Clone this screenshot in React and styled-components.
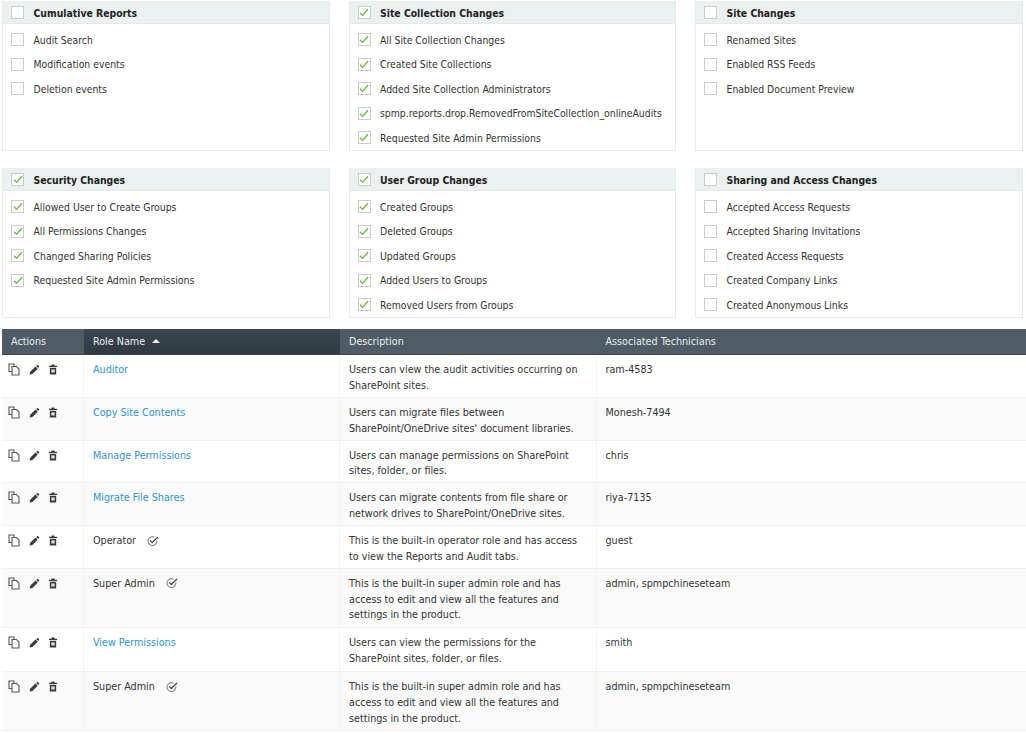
import React from 'react';
import styled, { createGlobalStyle } from 'styled-components';

const GlobalStyle = createGlobalStyle`
  html, body {
    margin: 0;
    padding: 0;
    background: #fff;
    overflow: hidden;
  }
  body {
    font-family: 'DejaVu Sans Condensed', 'DejaVu Sans', Verdana, sans-serif;
    font-size: 10.35px;
    color: #333;
  }
`;

const Page = styled.div`
  width: 1026px;
  height: 733px;
  overflow: hidden;
  padding-top: 1px;
  box-sizing: border-box;
`;

const CardGrid = styled.div`
  display: grid;
  grid-template-columns: repeat(3, 327.5px);
  column-gap: 19px;
  row-gap: 17.5px;
  padding-left: 2px;
`;

const Card = styled.section`
  height: 149.5px;
  box-sizing: border-box;
  border: 1px solid #e8eaea;
  border-top: 0;
  background: #fff;
`;

const CardHead = styled.header`
  height: 23px;
  box-sizing: border-box;
  display: flex;
  align-items: center;
  gap: 9.5px;
  padding: 1px 0 0 8px;
  background: #ebf0f0;
  border-bottom: 1px solid #e4e8e8;
  font-weight: 700;
  color: #222;
`;

const CardList = styled.ul`
  list-style: none;
  margin: 0;
  padding: 3.5px 0 0 8px;
`;

const CardItem = styled.li`
  height: 24.5px;
  display: flex;
  align-items: center;
  gap: 9.5px;
  white-space: nowrap;
`;

const Box = styled.span`
  width: 11px;
  height: 11px;
  flex: none;
  border: 1px solid #cbcbcb;
  background: #fff;
  display: flex;
  align-items: center;
  justify-content: center;
`;

const Table = styled.div`
  margin-top: 11.5px;
  margin-left: 2px;
  font-size: 10.7px;
`;

const HeadRow = styled.div`
  display: grid;
  grid-template-columns: 82px 256px 256.5px 429.5px;
  height: 26px;
  color: #e8ecee;
  background: #4f5c65;
  border-bottom: 1px solid #3b464e;
  box-sizing: border-box;
`;

const HeadCell = styled.div`
  display: flex;
  align-items: center;
  gap: 7px;
  padding: 0 0 1px 9px;
  background: ${p => (p.$sorted ? 'linear-gradient(#3a464e, #2f3a42)' : 'transparent')};
`;

const SortArrow = styled.span`
  width: 0;
  height: 0;
  border-left: 4px solid transparent;
  border-right: 4px solid transparent;
  border-bottom: 4px solid #f2f2f2;
`;

const Row = styled.div`
  display: grid;
  grid-template-columns: 82px 256px 256.5px 429.5px;
  height: ${p => p.$height}px;
  box-sizing: border-box;
  background: ${p => (p.$odd ? '#fafafa' : '#fff')};
  border-bottom: 1px solid #f0f0f0;
`;

const Cell = styled.div`
  padding: 7px 9px 0;
  border-right: 1px solid #f2f2f2;
  line-height: 15.7px;
  white-space: nowrap;
  &:last-child {
    border-right: 0;
  }
`;

const ActionsCell = styled(Cell)`
  display: flex;
  align-items: flex-start;
  gap: 8px;
  padding: 8px 0 0 6px;
`;

const RoleLink = styled.a`
  color: #2f92d2;
  text-decoration: none;
`;

const RoleName = styled.span`
  display: inline-flex;
  align-items: center;
  gap: 11px;
`;

const Check = () => (
  <svg width="10" height="9" viewBox="0 0 10 9">
    <path d="M1 4.8 L3.6 7.4 L9 1.2" fill="none" stroke="#6cb33f" strokeWidth="1.3" />
  </svg>
);

const CopyIcon = () => (
  <svg width="12" height="13" viewBox="0 0 12 13">
    <path d="M4 8.5H1V1h5v2.5" fill="none" stroke="#555" strokeWidth="1.1" />
    <path d="M4 3.5h4.5L11 6v6H4z" fill="#fff" stroke="#555" strokeWidth="1.1" />
  </svg>
);

const PencilIcon = () => (
  <svg width="12" height="13" viewBox="0 0 12 13">
    <path d="M1.6 11.6 L2.2 8.8 L7.5 3.5 L9.7 5.7 L4.4 11 Z" fill="#3a3a3a" />
    <path d="M8.2 2.9 L9.5 1.7 L11.4 3.6 L10.2 5 Z" fill="#3a3a3a" />
  </svg>
);

const TrashIcon = () => (
  <svg width="10" height="13" viewBox="0 0 11 13">
    <path d="M1 2.5h9v1.2H1zM3.8 1h3.4v1.5H3.8z" fill="#3a3a3a" />
    <path d="M2 4.6h7V12H2z" fill="#3a3a3a" />
    <path d="M3.6 6.4h3.8v3.4H3.6z" fill="#ddd" />
  </svg>
);

const BuiltInIcon = () => (
  <svg width="12" height="11" viewBox="0 0 12 11">
    <path d="M9.8 4.6A4.4 4.4 0 1 1 7.6 1.3" fill="none" stroke="#808080" strokeWidth="1.1" />
    <path d="M3.2 4.4 L5.2 6.6 L11 1" fill="none" stroke="#444" strokeWidth="1.3" />
  </svg>
);

const cards = [
  { title: 'Cumulative Reports', on: false, items: ['Audit Search', 'Modification events', 'Deletion events'] },
  {
    title: 'Site Collection Changes',
    on: true,
    items: [
      'All Site Collection Changes',
      'Created Site Collections',
      'Added Site Collection Administrators',
      'spmp.reports.drop.RemovedFromSiteCollection_onlineAudits',
      'Requested Site Admin Permissions',
    ],
  },
  { title: 'Site Changes', on: false, items: ['Renamed Sites', 'Enabled RSS Feeds', 'Enabled Document Preview'] },
  {
    title: 'Security Changes',
    on: true,
    items: [
      'Allowed User to Create Groups',
      'All Permissions Changes',
      'Changed Sharing Policies',
      'Requested Site Admin Permissions',
    ],
  },
  {
    title: 'User Group Changes',
    on: true,
    items: ['Created Groups', 'Deleted Groups', 'Updated Groups', 'Added Users to Groups', 'Removed Users from Groups'],
  },
  {
    title: 'Sharing and Access Changes',
    on: false,
    items: [
      'Accepted Access Requests',
      'Accepted Sharing Invitations',
      'Created Access Requests',
      'Created Company Links',
      'Created Anonymous Links',
    ],
  },
];

const superAdmin = {
  name: 'Super Admin',
  builtIn: true,
  height: 59,
  desc: (
    <>
      This is the built-in super admin role and has<br />
      access to edit and view all the features and<br />
      settings in the product.
    </>
  ),
  tech: 'admin, spmpchineseteam',
};

const roles = [
  {
    name: 'Auditor',
    link: true,
    height: 42.8,
    desc: (<>Users can view the audit activities occurring on<br />SharePoint sites.</>),
    tech: 'ram-4583',
  },
  {
    name: 'Copy Site Contents',
    link: true,
    height: 42.8,
    desc: (<>Users can migrate files between<br />SharePoint/OneDrive sites' document libraries.</>),
    tech: 'Monesh-7494',
  },
  {
    name: 'Manage Permissions',
    link: true,
    height: 42.8,
    desc: (<>Users can manage permissions on SharePoint<br />sites, folder, or files.</>),
    tech: 'chris',
  },
  {
    name: 'Migrate File Shares',
    link: true,
    height: 42.8,
    desc: (<>Users can migrate contents from file share or<br />network drives to SharePoint/OneDrive sites.</>),
    tech: 'riya-7135',
  },
  {
    name: 'Operator',
    builtIn: true,
    height: 42.8,
    desc: (<>This is the built-in operator role and has access<br />to view the Reports and Audit tabs.</>),
    tech: 'guest',
  },
  superAdmin,
  {
    name: 'View Permissions',
    link: true,
    height: 44.4,
    desc: (<>Users can view the permissions for the<br />SharePoint sites, folder, or files.</>),
    tech: 'smith',
  },
  superAdmin,
];

const App = () => (
  <Page>
    <GlobalStyle />
    <CardGrid>
      {cards.map(card => (
        <Card key={card.title}>
          <CardHead>
            <Box>{card.on && <Check />}</Box>
            {card.title}
          </CardHead>
          <CardList>
            {card.items.map(item => (
              <CardItem key={item}>
                <Box>{card.on && <Check />}</Box>
                {item}
              </CardItem>
            ))}
          </CardList>
        </Card>
      ))}
    </CardGrid>

    <Table>
      <HeadRow>
        <HeadCell>Actions</HeadCell>
        <HeadCell $sorted>Role Name <SortArrow /></HeadCell>
        <HeadCell>Description</HeadCell>
        <HeadCell>Associated Technicians</HeadCell>
      </HeadRow>
      {roles.map((role, i) => (
        <Row key={i} $odd={i % 2 === 1} $height={role.height}>
          <ActionsCell>
            <CopyIcon />
            <PencilIcon />
            <TrashIcon />
          </ActionsCell>
          <Cell>
            {role.link ? (
              <RoleLink href="#">{role.name}</RoleLink>
            ) : (
              <RoleName>{role.name} {role.builtIn && <BuiltInIcon />}</RoleName>
            )}
          </Cell>
          <Cell>{role.desc}</Cell>
          <Cell>{role.tech}</Cell>
        </Row>
      ))}
    </Table>
  </Page>
);

export default App;
